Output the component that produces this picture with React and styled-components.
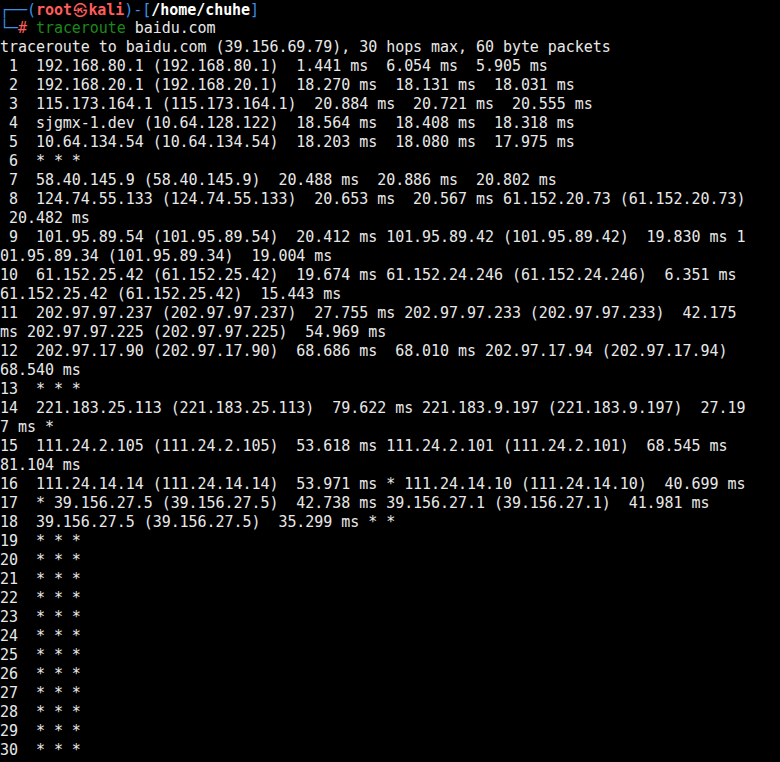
import styled, { createGlobalStyle } from "styled-components";

const GlobalStyle = createGlobalStyle`
  html, body {
    margin: 0;
    padding: 0;
    background: #000;
  }
`;

const lines = [
  "traceroute to baidu.com (39.156.69.79), 30 hops max, 60 byte packets",
  " 1  192.168.80.1 (192.168.80.1)  1.441 ms  6.054 ms  5.905 ms",
  " 2  192.168.20.1 (192.168.20.1)  18.270 ms  18.131 ms  18.031 ms",
  " 3  115.173.164.1 (115.173.164.1)  20.884 ms  20.721 ms  20.555 ms",
  " 4  sjgmx-1.dev (10.64.128.122)  18.564 ms  18.408 ms  18.318 ms",
  " 5  10.64.134.54 (10.64.134.54)  18.203 ms  18.080 ms  17.975 ms",
  " 6  * * *",
  " 7  58.40.145.9 (58.40.145.9)  20.488 ms  20.886 ms  20.802 ms",
  " 8  124.74.55.133 (124.74.55.133)  20.653 ms  20.567 ms 61.152.20.73 (61.152.20.73)",
  " 20.482 ms",
  " 9  101.95.89.54 (101.95.89.54)  20.412 ms 101.95.89.42 (101.95.89.42)  19.830 ms 1",
  "01.95.89.34 (101.95.89.34)  19.004 ms",
  "10  61.152.25.42 (61.152.25.42)  19.674 ms 61.152.24.246 (61.152.24.246)  6.351 ms",
  "61.152.25.42 (61.152.25.42)  15.443 ms",
  "11  202.97.97.237 (202.97.97.237)  27.755 ms 202.97.97.233 (202.97.97.233)  42.175",
  "ms 202.97.97.225 (202.97.97.225)  54.969 ms",
  "12  202.97.17.90 (202.97.17.90)  68.686 ms  68.010 ms 202.97.17.94 (202.97.17.94)",
  "68.540 ms",
  "13  * * *",
  "14  221.183.25.113 (221.183.25.113)  79.622 ms 221.183.9.197 (221.183.9.197)  27.19",
  "7 ms *",
  "15  111.24.2.105 (111.24.2.105)  53.618 ms 111.24.2.101 (111.24.2.101)  68.545 ms",
  "81.104 ms",
  "16  111.24.14.14 (111.24.14.14)  53.971 ms * 111.24.14.10 (111.24.14.10)  40.699 ms",
  "17  * 39.156.27.5 (39.156.27.5)  42.738 ms 39.156.27.1 (39.156.27.1)  41.981 ms",
  "18  39.156.27.5 (39.156.27.5)  35.299 ms * *",
];

for (let i = 19; i <= 30; i++) {
  lines.push(`${i}  * * *`);
}

const Terminal = styled.div`
  width: 780px;
  height: 762px;
  overflow: hidden;
  background: #000;
  color: #e8e8e8;
  font-family: "DejaVu Sans Mono", "Liberation Mono", monospace;
  font-size: 15px;
  line-height: 19px;
  letter-spacing: -0.05px;
  display: flex;
  flex-direction: column;
`;

const Line = styled.div`
  white-space: pre;
  height: 19px;
`;

const Seg = styled.span`
  color: ${(p) => p.$c || "inherit"};
  font-weight: ${(p) => (p.$b ? "bold" : "normal")};
`;

const Skull = styled.span`
  display: inline-block;
  width: 2ch;
  text-align: center;
  color: #ff5c5c;
  font-family: "Noto Sans CJK KR", "DejaVu Sans", sans-serif;
  font-size: 14px;
  font-weight: bold;
`;

const BLUE = "#3b8eea";
const RED = "#ff5c5c";
const GREEN = "#1a8a1a";

export default function App() {
  return (
    <>
      <GlobalStyle />
      <Terminal>
        <Line>
          <Seg $c={BLUE}>┌──(</Seg>
          <Seg $c={RED} $b>root</Seg>
          <Skull>㉿</Skull>
          <Seg $c={RED} $b>kali</Seg>
          <Seg $c={BLUE}>)-[</Seg>
          <Seg $c="#ffffff" $b>/home/chuhe</Seg>
          <Seg $c={BLUE}>]</Seg>
        </Line>
        <Line>
          <Seg $c={BLUE}>└─</Seg>
          <Seg $c={RED}>#</Seg>{" "}
          <Seg $c={GREEN}>traceroute</Seg>
          <Seg> baidu.com</Seg>
        </Line>
        {lines.map((text, i) => (
          <Line key={i}>{text}</Line>
        ))}
      </Terminal>
    </>
  );
}
